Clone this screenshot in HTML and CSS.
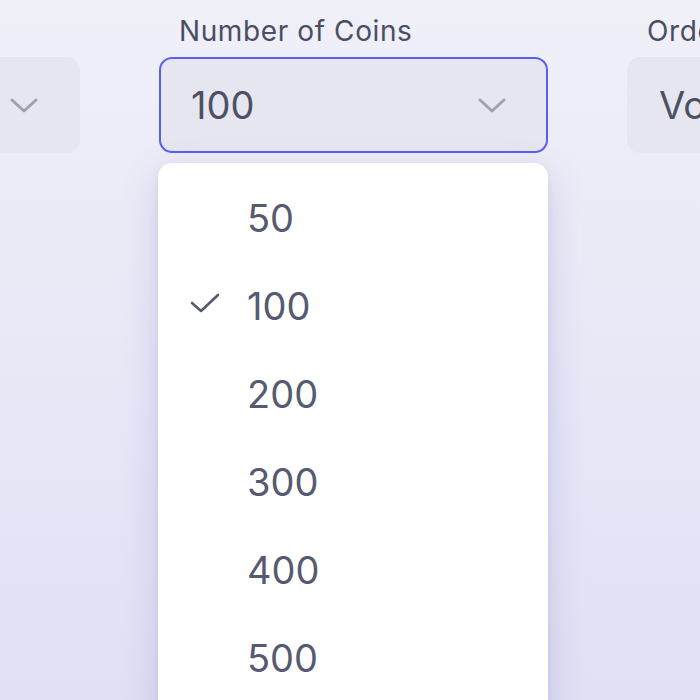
FILE: index.html
```html
<!DOCTYPE html>
<html lang="en">
<head>
<meta charset="utf-8">
<link rel="stylesheet" href="styles.css">
</head>
<body>
<div class="filters">
  <div class="field">
    <div class="label">Category</div>
    <div class="select">
      <span class="value">All</span>
      <svg class="chev" width="28" height="16" viewBox="0 0 28 16"><path d="M2 2 L14 13 L26 2" fill="none" stroke="#a0a1ae" stroke-width="3" stroke-linecap="round" stroke-linejoin="round"/></svg>
    </div>
  </div>
  <div class="field">
    <div class="label">Number of Coins</div>
    <div class="select-wrap">
      <div class="select focused">
        <span class="value">100</span>
        <svg class="chev" width="28" height="16" viewBox="0 0 28 16"><path d="M2 2 L14 13 L26 2" fill="none" stroke="#a0a1ae" stroke-width="3" stroke-linecap="round" stroke-linejoin="round"/></svg>
      </div>
      <ul class="menu">
        <li class="item"><span class="check"></span><span>50</span></li>
        <li class="item selected"><span class="check"><svg width="30" height="20" viewBox="0 0 30 20"><path d="M2 10 L11 18 L28 2" fill="none" stroke="#565a70" stroke-width="2.6" stroke-linecap="round" stroke-linejoin="round"/></svg></span><span>100</span></li>
        <li class="item"><span class="check"></span><span>200</span></li>
        <li class="item"><span class="check"></span><span>300</span></li>
        <li class="item"><span class="check"></span><span>400</span></li>
        <li class="item"><span class="check"></span><span>500</span></li>
      </ul>
    </div>
  </div>
  <div class="field">
    <div class="label">Order By</div>
    <div class="select">
      <span class="value">Volume</span>
      <svg class="chev" width="28" height="16" viewBox="0 0 28 16"><path d="M2 2 L14 13 L26 2" fill="none" stroke="#a0a1ae" stroke-width="3" stroke-linecap="round" stroke-linejoin="round"/></svg>
    </div>
  </div>
</div>
</body>
</html>
```

FILE: styles.css
```css
html, body {
  margin: 0;
  height: 100%;
}
body {
  background: linear-gradient(180deg, #f0f0f9 0%, #e9e9f7 45%, #e0e1f5 100%);
  font-family: Inter, "Noto Sans", sans-serif;
  color: #4c4f64;
  overflow: hidden;
}
.filters {
  display: grid;
  grid-template-columns: 389px 389px 389px;
  column-gap: 79px;
  margin-left: -309px;
  padding-top: 14px;
}
.label {
  font-size: 28px;
  line-height: 34px;
  height: 34px;
  padding-left: 20px;
  margin-bottom: 9px;
  color: #4a4d62;
  letter-spacing: 0.6px;
  white-space: nowrap;
}
.select-wrap {
  position: relative;
}
.select {
  box-sizing: border-box;
  height: 96px;
  border: 2px solid transparent;
  border-radius: 13px;
  background: #e6e6f0;
  display: flex;
  align-items: center;
  justify-content: space-between;
  padding: 0 40px 0 30px;
}
.select.focused {
  border-color: #5a5ef2;
}
.value {
  font-size: 38px;
  color: #4d5065;
}
.chev {
  display: block;
  margin-top: 2px;
}
.menu {
  position: absolute;
  top: 106px;
  left: -1px;
  width: 390px;
  height: 600px;
  margin: 0;
  padding: 11px 0 0;
  list-style: none;
  background: #ffffff;
  border-radius: 14px;
  box-shadow: 0 12px 36px rgba(90, 92, 170, 0.22), 0 2px 6px rgba(90, 92, 170, 0.08);
}
.item {
  display: flex;
  align-items: center;
  height: 88px;
  font-size: 38px;
  color: #565a70;
}
.check {
  width: 89px;
  display: flex;
  padding-left: 32px;
  box-sizing: border-box;
  margin-top: -6px;
}
.check svg {
  display: block;
}
```
